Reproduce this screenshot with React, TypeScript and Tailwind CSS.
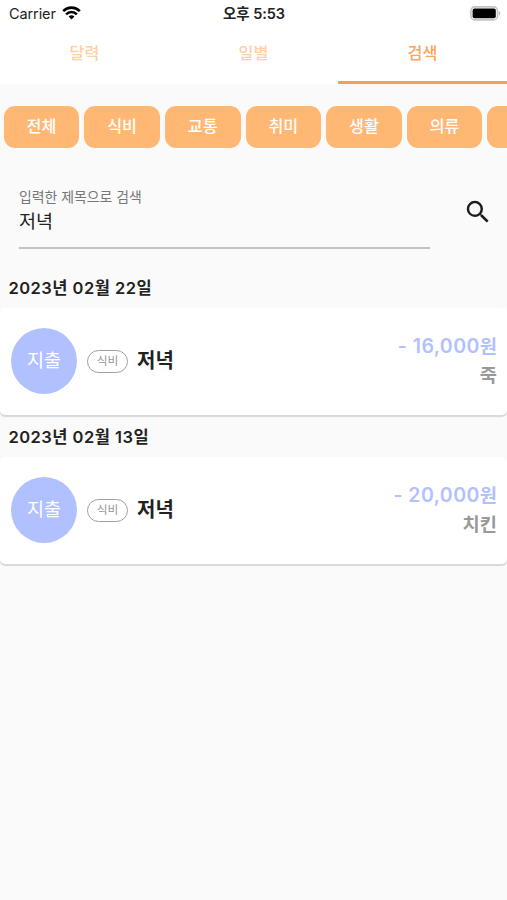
const categories = ['전체', '식비', '교통', '취미', '생활', '의류', ''];

const entries = [
  { date: '2023년 02월 22일', type: '지출', category: '식비', title: '저녁', amount: '- 16,000', memo: '죽' },
  { date: '2023년 02월 13일', type: '지출', category: '식비', title: '저녁', amount: '- 20,000', memo: '치킨' },
];

function StatusBar() {
  return (
    <div className="grid h-7 grid-cols-3 items-center pl-[9px] pr-[6px] text-black">
      <div className="flex items-center gap-[6px]">
        <span className="text-[14.5px] leading-7 tracking-[-0.1px] text-[#222]">Carrier</span>
        <svg className="mb-[2px] h-[14px] w-[19px]" viewBox="0 0 19 14" fill="none" stroke="currentColor">
          <path d="M1.2 5.1a11.8 11.8 0 0 1 16.6 0" strokeWidth="2.7" />
          <path d="M4.1 8.3a7.6 7.6 0 0 1 10.8 0" strokeWidth="2.5" />
          <path d="M6.6 10.6a4.1 4.1 0 0 1 5.8 0L9.5 13.5Z" fill="currentColor" stroke="none" />
        </svg>
      </div>
      <span className="pr-[2px] text-center text-[14.5px] font-semibold leading-7 tracking-[-0.05px] text-[#222]">오후 5:53</span>
      <svg className="mb-[2px] h-[15px] w-[31px] justify-self-end" viewBox="0 0 31 15">
        <rect x="0.9" y="0.9" width="26.6" height="13" rx="4" fill="#fff" stroke="#c4c4c4" strokeWidth="1.6" />
        <rect x="2.6" y="2.6" width="23.2" height="9.6" rx="1.8" fill="#000" />
        <path d="M28.8 5.2v4.4c2-.6 2-3.8 0-4.4Z" fill="#bdbdbd" />
      </svg>
    </div>
  );
}

function Tabs() {
  return (
    <div className="grid h-14 grid-cols-3 text-center text-[16.2px] font-medium leading-[51px]">
      <div className="text-[#ffd0a4]">달력</div>
      <div className="text-[#ffd0a4]">일별</div>
      <div className="border-b-[3px] border-[#f7a055] text-[#fba45a]">검색</div>
    </div>
  );
}

export default function App() {
  return (
    <div className="h-[900px] w-[507px] overflow-hidden bg-[#fafafa] font-['Inter','Noto_Sans_CJK_KR',sans-serif] text-[#222]">
      <header className="bg-white">
        <StatusBar />
        <Tabs />
      </header>

      <div className="mt-[22px] flex gap-[5px] overflow-hidden pl-[3.6px]">
        {categories.map((name, i) => (
          <button
            key={i}
            className="h-[41.5px] w-[75.65px] shrink-0 rounded-[11px] bg-[#ffb873] text-[16.2px] font-medium leading-[41px] text-white"
          >
            {name}
          </button>
        ))}
      </div>

      <div className="mt-[38px] flex pl-[19px]">
        <div className="h-[63px] w-[411px] border-b-2 border-[#c2c2c2]">
          <div className="-mt-[1px] text-[13.9px] leading-6 text-[#777]">입력한 제목으로 검색</div>
          <div className="text-[18.5px] leading-6">저녁</div>
        </div>
        <svg className="ml-[32.5px] mt-[11px] size-[30px]" viewBox="0 0 24 24" fill="#1c1c1c">
          <path d="M15.5 14h-.79l-.28-.27A6.471 6.471 0 0 0 16 9.5 6.5 6.5 0 1 0 9.5 16c1.61 0 3.09-.59 4.23-1.57l.27.28v.79l5 4.99L20.49 19l-4.99-5zm-6 0C7.01 14 5 11.99 5 9.5S7.01 5 9.5 5 14 7.01 14 9.5 11.99 14 9.5 14z" />
        </svg>
      </div>

      <main className="pt-[19px]">
        {entries.map((e) => (
          <section key={e.date} className="h-[149px]">
            <h2 className="h-10 pl-[8.5px] text-[16.5px] font-semibold leading-10 tracking-[0.47px]">{e.date}</h2>
            <div className="flex h-[107px] items-center rounded-[5px] bg-white pl-[11px] pr-[10px] shadow-[0_1.5px_1px_#d8d8d8]">
              <div className="size-[66px] rounded-full bg-[#b1c1ff] text-center text-[18.5px] leading-[65px] text-white">
                {e.type}
              </div>
              <div className="ml-[10px] h-[23px] w-[41px] rounded-full border border-[#a0a0a0] text-center text-[11.8px] leading-[21px] text-[#999]">
                {e.category}
              </div>
              <div className="ml-[9px] text-[20px] font-semibold leading-7">{e.title}</div>
              <div className="ml-auto text-right text-[18.7px] font-semibold leading-[29px] text-[#999]">
                <div className="text-[#b1c1ff]">
                  <span className="text-[19.5px] tracking-[0.45px]">{e.amount}</span>원
                </div>
                <div>{e.memo}</div>
              </div>
            </div>
          </section>
        ))}
      </main>
    </div>
  );
}
